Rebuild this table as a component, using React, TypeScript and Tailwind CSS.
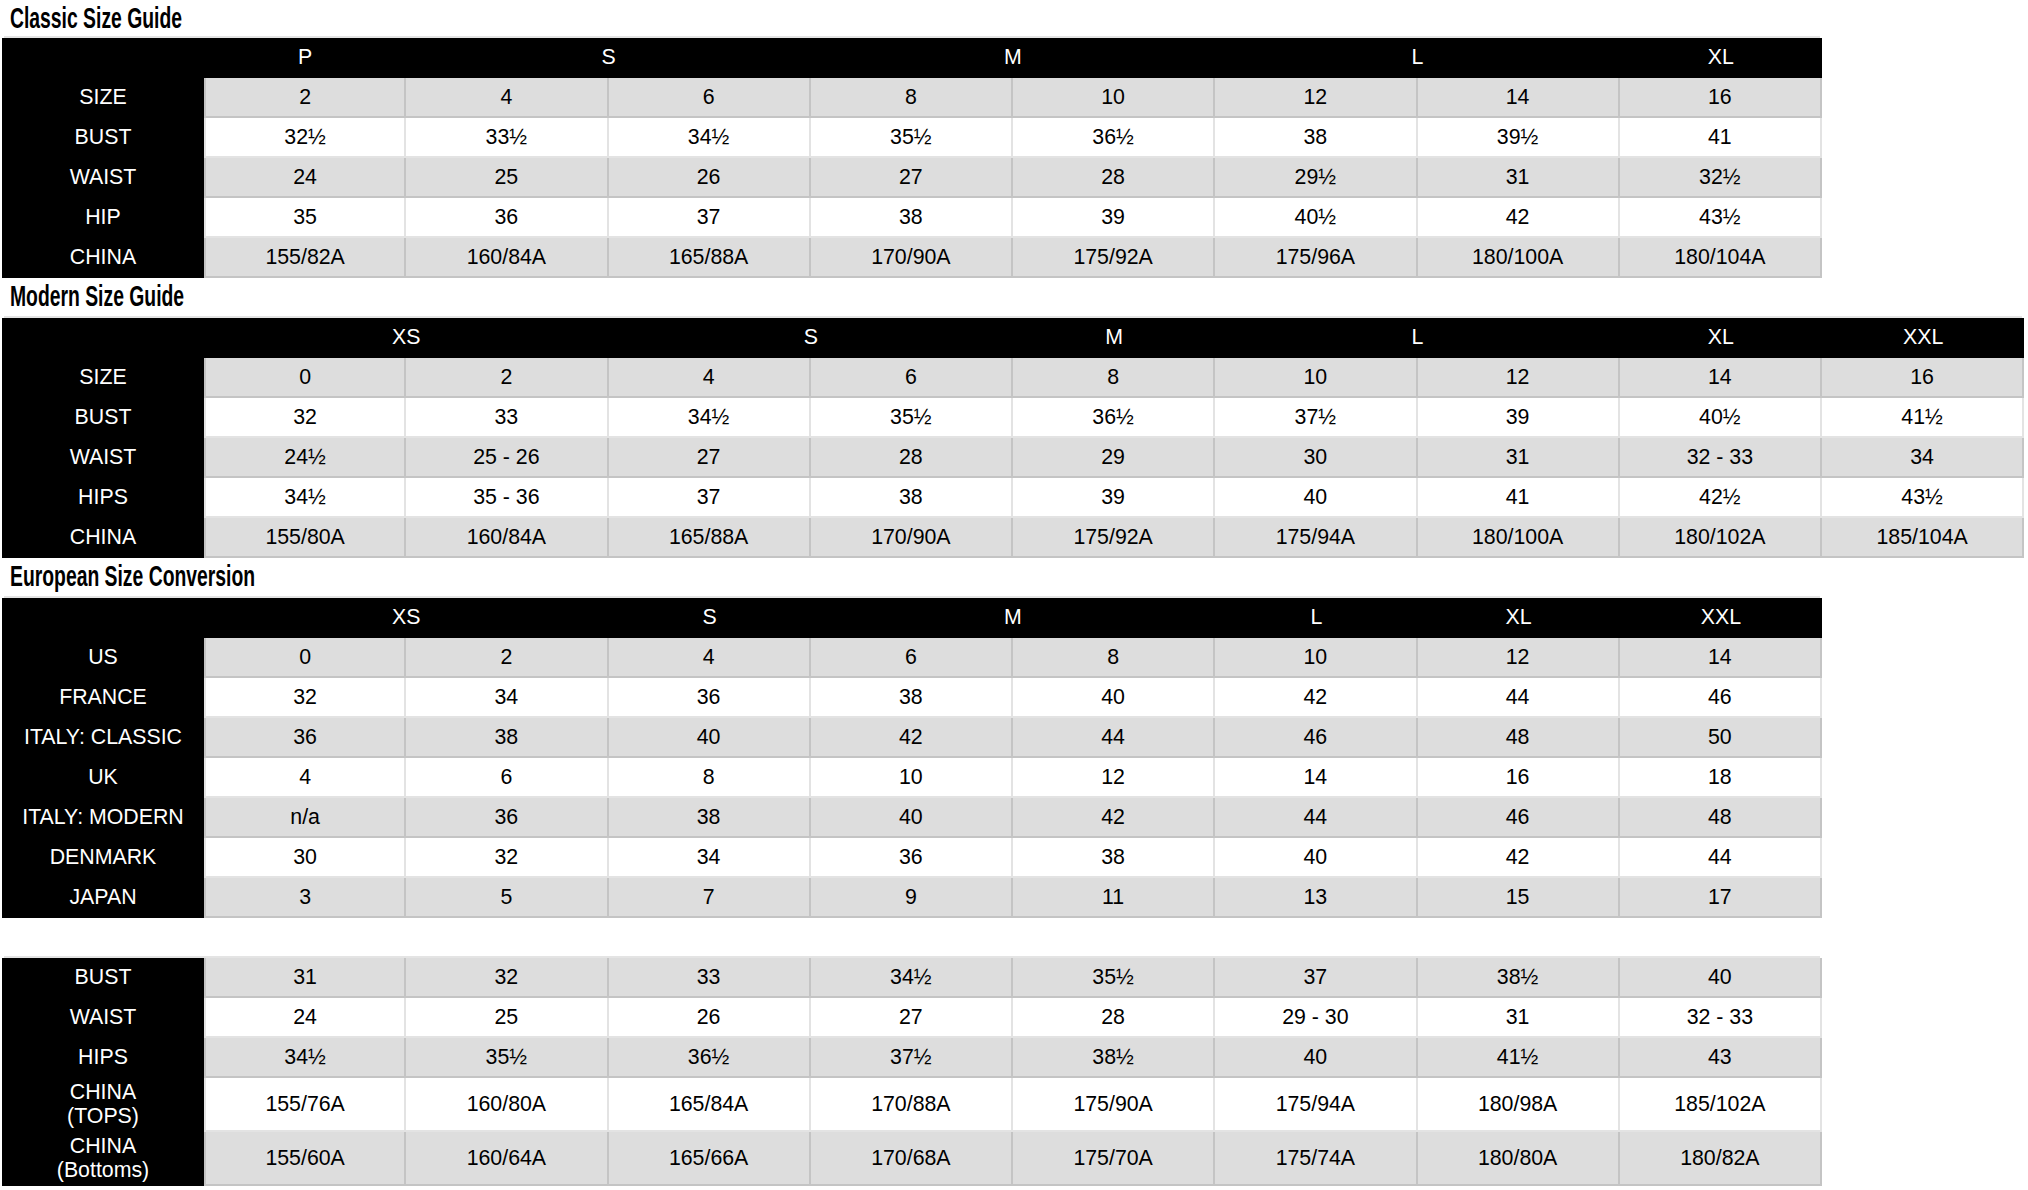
import React from "react";

type Head = [string, number][];

const span: Record<number, string> = {
  1: "col-span-1",
  2: "col-span-2",
};

function Title({ text, h }: { text: string; h: string }) {
  return (
    <div className={`${h} pl-[10px] overflow-hidden`}>
      <span className="inline-block origin-left scale-x-[0.667] font-bold text-[29px] leading-[36px] whitespace-nowrap text-black font-['Liberation_Sans',Arial,sans-serif]">
        {text}
      </span>
    </div>
  );
}

function Table({
  cols,
  head,
  rows,
}: {
  cols: 8 | 9;
  head?: Head;
  rows: { label: string[]; cells: string[]; tall?: boolean }[];
}) {
  const gridCls =
    cols === 8
      ? "grid grid-cols-[202px_repeat(8,202.25px)]"
      : "grid grid-cols-[202px_repeat(9,202.25px)]";
  return (
    <div className="ml-[2px] w-max">
      <div className="h-[2px] mx-[2px] bg-[#e4e4e4]" />
      <div className={gridCls}>
        {head && (
          <>
            <div className="h-[40px] bg-black" />
            {head.map(([t, n], i) => (
              <div
                key={i}
                className={`${span[n]} h-[40px] bg-black text-white flex items-center justify-center`}
              >
                {t}
              </div>
            ))}
          </>
        )}
        {rows.map((r, ri) => {
          const gray = ri % 2 === 0;
          const h = r.tall ? "h-[54px]" : "h-[40px]";
          return (
            <React.Fragment key={ri}>
              <div
                className={`${h} bg-black text-white flex flex-col items-center justify-center pb-[3px] leading-[24px] text-center`}
              >
                {r.label.map((l, li) => (
                  <span key={li}>{l}</span>
                ))}
              </div>
              {r.cells.map((c, ci) => (
                <div
                  key={ci}
                  className={`${h} ${gray ? "bg-[#dddddd]" : "bg-white"} ${
                    ci === 0 ? "border-l-2" : ""
                  } border-r-2 border-b-2 border-black/[0.11] pt-[2px] flex items-center justify-center text-black`}
                >
                  {c}
                </div>
              ))}
            </React.Fragment>
          );
        })}
      </div>
    </div>
  );
}

const classicHead: Head = [
  ["P", 1],
  ["S", 2],
  ["M", 2],
  ["L", 2],
  ["XL", 1],
];
const classicRows = [
  { label: ["SIZE"], cells: ["2", "4", "6", "8", "10", "12", "14", "16"] },
  { label: ["BUST"], cells: ["32½", "33½", "34½", "35½", "36½", "38", "39½", "41"] },
  { label: ["WAIST"], cells: ["24", "25", "26", "27", "28", "29½", "31", "32½"] },
  { label: ["HIP"], cells: ["35", "36", "37", "38", "39", "40½", "42", "43½"] },
  {
    label: ["CHINA"],
    cells: ["155/82A", "160/84A", "165/88A", "170/90A", "175/92A", "175/96A", "180/100A", "180/104A"],
  },
];

const modernHead: Head = [
  ["XS", 2],
  ["S", 2],
  ["M", 1],
  ["L", 2],
  ["XL", 1],
  ["XXL", 1],
];
const modernRows = [
  { label: ["SIZE"], cells: ["0", "2", "4", "6", "8", "10", "12", "14", "16"] },
  { label: ["BUST"], cells: ["32", "33", "34½", "35½", "36½", "37½", "39", "40½", "41½"] },
  { label: ["WAIST"], cells: ["24½", "25 - 26", "27", "28", "29", "30", "31", "32 - 33", "34"] },
  { label: ["HIPS"], cells: ["34½", "35 - 36", "37", "38", "39", "40", "41", "42½", "43½"] },
  {
    label: ["CHINA"],
    cells: [
      "155/80A",
      "160/84A",
      "165/88A",
      "170/90A",
      "175/92A",
      "175/94A",
      "180/100A",
      "180/102A",
      "185/104A",
    ],
  },
];

const euroHead: Head = [
  ["XS", 2],
  ["S", 1],
  ["M", 2],
  ["L", 1],
  ["XL", 1],
  ["XXL", 1],
];
const euroRows = [
  { label: ["US"], cells: ["0", "2", "4", "6", "8", "10", "12", "14"] },
  { label: ["FRANCE"], cells: ["32", "34", "36", "38", "40", "42", "44", "46"] },
  { label: ["ITALY: CLASSIC"], cells: ["36", "38", "40", "42", "44", "46", "48", "50"] },
  { label: ["UK"], cells: ["4", "6", "8", "10", "12", "14", "16", "18"] },
  { label: ["ITALY: MODERN"], cells: ["n/a", "36", "38", "40", "42", "44", "46", "48"] },
  { label: ["DENMARK"], cells: ["30", "32", "34", "36", "38", "40", "42", "44"] },
  { label: ["JAPAN"], cells: ["3", "5", "7", "9", "11", "13", "15", "17"] },
];

const bodyRows = [
  { label: ["BUST"], cells: ["31", "32", "33", "34½", "35½", "37", "38½", "40"] },
  { label: ["WAIST"], cells: ["24", "25", "26", "27", "28", "29 - 30", "31", "32 - 33"] },
  { label: ["HIPS"], cells: ["34½", "35½", "36½", "37½", "38½", "40", "41½", "43"] },
  {
    label: ["CHINA", "(TOPS)"],
    tall: true,
    cells: ["155/76A", "160/80A", "165/84A", "170/88A", "175/90A", "175/94A", "180/98A", "185/102A"],
  },
  {
    label: ["CHINA", "(Bottoms)"],
    tall: true,
    cells: ["155/60A", "160/64A", "165/66A", "170/68A", "175/70A", "175/74A", "180/80A", "180/82A"],
  },
];

export default function App() {
  return (
    <div className="w-[2028px] min-h-[1190px] bg-white text-[21.33px] font-['Liberation_Sans',Arial,sans-serif]">
      <Title text="Classic Size Guide" h="h-[36px]" />
      <Table cols={8} head={classicHead} rows={classicRows} />
      <Title text="Modern Size Guide" h="h-[38px]" />
      <Table cols={9} head={modernHead} rows={modernRows} />
      <Title text="European Size Conversion" h="h-[38px]" />
      <Table cols={8} head={euroHead} rows={euroRows} />
      <div className="h-[38px]" />
      <Table cols={8} rows={bodyRows} />
    </div>
  );
}
